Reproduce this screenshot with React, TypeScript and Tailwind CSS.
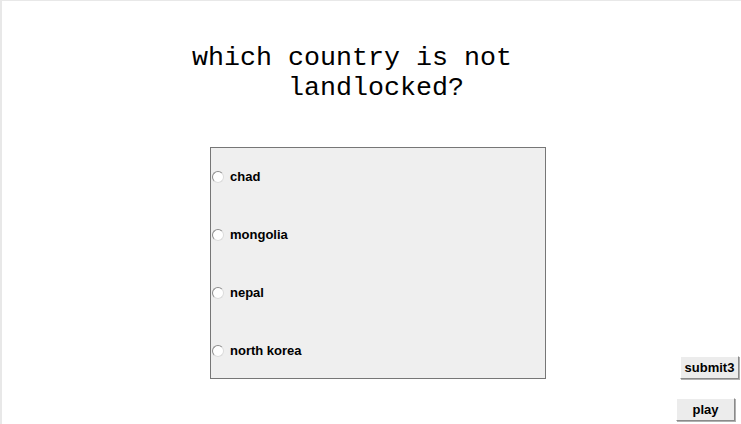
import React from 'react';

const options = ['chad', 'mongolia', 'nepal', 'north korea'];

const Radio: React.FC = () => (
    <span className="ml-[1px] mr-[6px] inline-block h-[12px] w-[12px] shrink-0 rounded-full border border-t-[#8d8d8d] border-l-[#8d8d8d] border-r-[#dcdcdc] border-b-[#dcdcdc] bg-white" />
);

const OldButton: React.FC<{ label: string; className?: string }> = ({ label, className }) => (
    <button
        className={`flex h-[23px] w-[59px] items-center justify-center border border-t-white border-l-white border-r-[#8a8a8a] border-b-[#8a8a8a] bg-[#ececec] text-[13px] font-bold text-black shadow-[1px_1px_0_#b0b0b0] ${className ?? ''}`}
        style={{ fontFamily: '"Liberation Sans", Arial, sans-serif' }}
    >
        {label}
    </button>
);

export default function App() {
    return (
        <div className="flex h-[424px] w-[741px] border-t border-l-2 border-[#e8e8e8] bg-white">
            <div className="flex-1">
                <div
                    className="pl-[190px] pt-[42px] text-[26.67px] leading-[30px] text-black"
                    style={{ fontFamily: '"Liberation Mono", "Courier New", monospace' }}
                >
                    <div className="whitespace-pre">which country is not</div>
                    <div className="whitespace-pre">      landlocked?</div>
                </div>
                <div
                    className="ml-[208px] mt-[44px] flex h-[232px] w-[336px] flex-col gap-[43px] border border-[#767676] bg-[#efefef] pt-[21px]"
                    style={{ fontFamily: '"Liberation Sans", Arial, sans-serif' }}
                >
                    {options.map((o) => (
                        <label key={o} className="flex h-[15px] items-center text-[13px] font-bold text-black">
                            <Radio />
                            <span>{o}</span>
                        </label>
                    ))}
                </div>
            </div>
            <div className="flex flex-col items-end justify-end gap-[19px] pb-[3px]">
                <OldButton label="submit3" className="mr-[2px]" />
                <OldButton label="play" className="mr-[6px]" />
            </div>
        </div>
    );
}
